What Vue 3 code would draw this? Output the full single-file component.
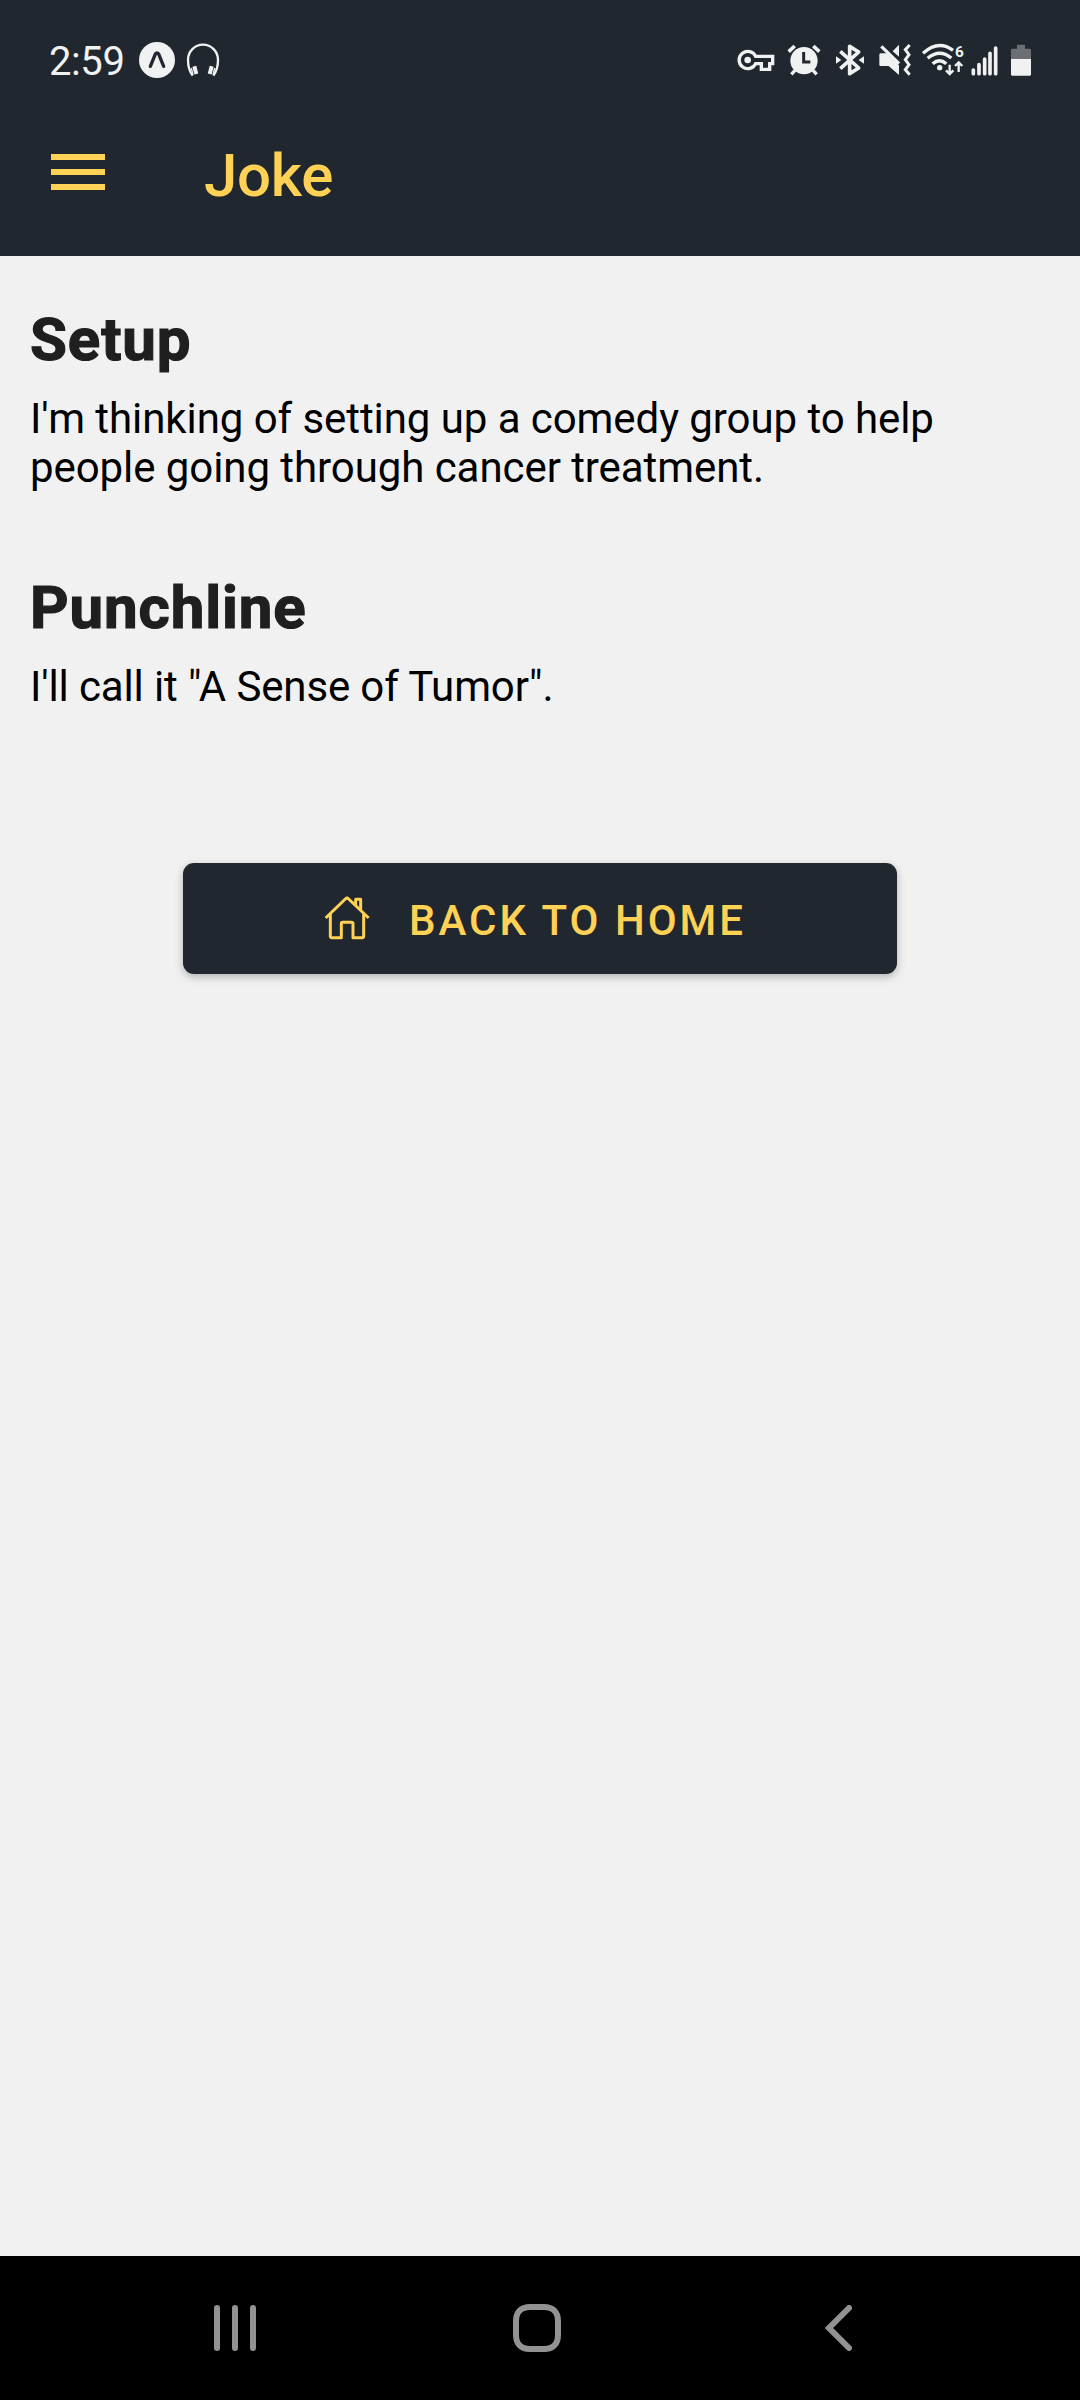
<script setup>
const jokeParts = [
  { title: 'Setup', text: "I'm thinking of setting up a comedy group to help people going through cancer treatment." },
  { title: 'Punchline', text: 'I\'ll call it "A Sense of Tumor".' }
]
</script>

<template>
  <div class="screen">
    <header class="top">
      <div class="status">
        <span class="time">2:59</span>
        <svg class="expo" width="40" height="60" viewBox="321 0 120 180">
          <circle cx="381" cy="90" r="54" fill="#f0f2f2" />
          <path d="M361 109L376 72Q381 65 386 72L401 109" fill="none" stroke="#21272f" stroke-width="10" stroke-linecap="round" />
        </svg>
        <svg class="phones" width="36" height="60" viewBox="465 0 108 180" fill="none" stroke="#f0f2f2">
          <path d="M488 137C477 122 474 106 474 89a45 45 0 0 1 90 0C564 106 561 122 550 137" stroke-width="7" />
          <path d="M493 109l6 23M545 109l-6 23" stroke-width="12" />
          <path d="M484 114l5 20M554 114l-5 20" stroke-width="4" />
        </svg>
        <span class="spacer"></span>
        <svg width="42" height="60" viewBox="45 0 126 180" fill="none" stroke="#f0f2f2">
          <path d="M107 79a26 26 0 1 0 0 22H124V118H149V101H158V79Z" stroke-width="10" />
          <circle cx="83" cy="90" r="10" fill="#f0f2f2" stroke="none" />
        </svg>
        <svg class="alarm" width="36" height="60" viewBox="198 0 108 180" fill="none" stroke="#f0f2f2">
          <circle cx="252" cy="92" r="41" fill="#f0f2f2" stroke="none" />
          <path d="M206 65L224 48M298 65L280 48" stroke-width="11" />
          <path d="M225 121l-11 12M279 121l11 12" stroke-width="10" />
          <path d="M251 66V96H271" stroke="#21272f" stroke-width="9" />
        </svg>
        <svg class="bt" width="32" height="60" viewBox="342 0 96 180" fill="none" stroke="#f0f2f2">
          <path d="M361 64L416 114L389 131V49L416 66L361 116" stroke-width="11" stroke-linejoin="round" />
          <path d="M348 79L364 90L348 101ZM432 79L416 90L432 101Z" fill="#f0f2f2" stroke="none" />
        </svg>
        <svg class="mute" width="36" height="60" viewBox="21 0 108 180" fill="none" stroke="#f0f2f2">
          <path d="M28 74Q28 70 32 70H50L87 106V135L56 108H32Q28 108 28 104Z" fill="#f0f2f2" stroke="none" />
          <path d="M68 64L87 44V80Z" fill="#f0f2f2" stroke="none" />
          <path d="M34 49L87 101" stroke-width="10" />
          <path d="M119 45L106 59L117 74L106 89L117 104L106 119L119 134" stroke-width="9" />
        </svg>
        <svg class="wifi" width="45" height="60" viewBox="150 0 135 180" fill="none" stroke="#f0f2f2">
          <path d="M159 70Q205 28 249 61M173 85Q208 55 244 84M188 101Q208 83 229 101" stroke-width="10" />
          <circle cx="209" cy="113" r="8" fill="#f0f2f2" stroke="none" />
          <path d="M239 104V131M228 121L239 132L250 121M266 126V98M255 108L266 97L277 108" stroke-width="7" />
          <text x="255" y="81" class="band">6</text>
        </svg>
        <svg class="signal" width="30" height="60" viewBox="300 0 90 180" stroke="#f0f2f2" stroke-width="11" stroke-linecap="round">
          <path d="M310 120V131M327 104V131M344 87V131M360 70V131M377 54V131" />
        </svg>
        <svg class="battery" width="24" height="60" viewBox="417 0 72 180">
          <path d="M441 44H465V56H479Q483 56 483 60V88H423V60Q423 56 427 56H441Z" fill="#6b6f73" />
          <path d="M423 87H483V133Q483 137 479 137H427Q423 137 423 133Z" fill="#f0f2f2" />
        </svg>
      </div>
      <div class="appbar">
        <button class="menu" aria-label="Menu"><i></i><i></i><i></i></button>
        <h1>Joke</h1>
      </div>
    </header>

    <main>
      <section v-for="part in jokeParts" :key="part.title">
        <h2>{{ part.title }}</h2>
        <p>{{ part.text }}</p>
      </section>
      <button class="home">
        <svg width="46" height="46" viewBox="462 141 138 138" fill="none" stroke="#ffd255" stroke-width="9" stroke-linejoin="round">
          <path d="M467 207L526 150Q531 145 536 150L596 207" />
          <path d="M481 195V262Q481 266 485 266H514V224Q514 220 518 220H544Q549 220 549 224V266H577Q581 266 581 262V195" />
          <path d="M557 168V151H572V184" />
        </svg>
        <span>BACK TO HOME</span>
      </button>
    </main>

    <nav>
      <svg class="recents" width="42" height="46" viewBox="0 0 42 46" stroke="#929292" stroke-width="6" stroke-linecap="round">
        <path d="M3 3V43M21 3V43M39 3V43" />
      </svg>
      <svg class="circle" width="48" height="48" viewBox="0 0 48 48" fill="none" stroke="#929292" stroke-width="6">
        <path d="M17 3H31C40 3 45 8 45 17V31C45 40 40 45 31 45H17C8 45 3 40 3 31V17C3 8 8 3 17 3Z" />
      </svg>
      <svg class="back" width="27" height="46" viewBox="0 0 27 46" fill="none" stroke="#929292" stroke-width="6" stroke-linecap="round">
        <path d="M24 3L4 23L24 43" />
      </svg>
    </nav>
  </div>
</template>

<style>
body { margin: 0; }
</style>

<style scoped>
.screen {
  width: 1080px;
  height: 2400px;
  display: flex;
  flex-direction: column;
  background: #f1f1f1;
  font-family: Roboto, sans-serif;
}
svg { display: block; flex: none; }
button { border: 0; padding: 0; font-family: inherit; }
.top { height: 256px; flex: none; background: #21272f; }
.status {
  height: 60px;
  padding: 30px 47px 0 49px;
  display: flex;
  align-items: center;
}
.time { width: 88px; font-size: 40px; line-height: 60px; color: #f0f2f2; padding-top: 3px; letter-spacing: -0.4px; }
.phones { margin-left: 8px; }
.spacer { flex: 1; }
.alarm { margin-left: 9px; }
.bt { margin-left: 12px; }
.mute { margin-left: 11px; }
.wifi { margin-left: 7px; }
.signal { margin-left: 5px; }
.battery { margin-left: 9px; }
.band { font: 700 46px Roboto, sans-serif; fill: #f0f2f2; stroke: none; }
.appbar { display: flex; align-items: flex-start; padding: 49px 0 0 51px; }
.menu {
  width: 54px;
  margin-top: 15px;
  background: none;
  display: flex;
  flex-direction: column;
  gap: 9px;
}
.menu i { display: block; width: 54px; height: 6px; background: #ffd255; }
h1 { margin: 1px 0 0 99px; font-size: 60px; line-height: 72px; font-weight: 500; color: #ffd255; letter-spacing: -0.3px; }
main { flex: 1; padding: 49px 30px 0; display: flex; flex-direction: column; }
section { margin-bottom: 81px; }
section + section { margin-bottom: 152px; }
h2 {
  margin: 0;
  font-size: 60px;
  line-height: 70px;
  font-weight: 700;
  color: #1f1f1f;
  letter-spacing: 0.9px;
  -webkit-text-stroke: 1.2px #1f1f1f;
}
p { margin: 19px 0 0; font-size: 42px; line-height: 49px; color: #000; letter-spacing: -0.07px; }
section + section p { letter-spacing: -0.13px; }
.home {
  align-self: center;
  width: 714px;
  height: 111px;
  border-radius: 11px;
  background: #21272f;
  color: #ffd255;
  box-shadow: 0 3px 8px rgba(0, 0, 0, 0.26);
  display: flex;
  align-items: center;
  padding-left: 141px;
  font-size: 42px;
  font-weight: 500;
  letter-spacing: 3px;
}
.home span { margin-left: 39px; padding-top: 4px; }
nav { height: 144px; flex: none; background: #000; display: flex; align-items: center; padding-left: 214px; }
.circle { margin-left: 257px; }
.back { margin-left: 264px; }
</style>
